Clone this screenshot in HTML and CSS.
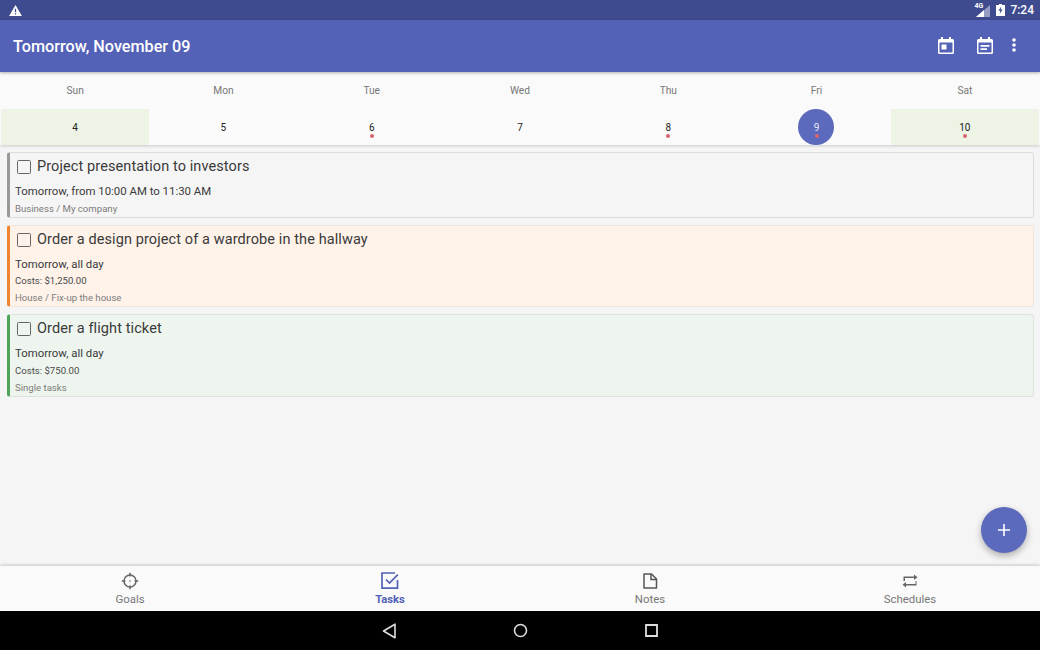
FILE: index.html
```html
<!DOCTYPE html>
<html lang="en">
<head>
<meta charset="utf-8">
<title>Tasks</title>
<link rel="stylesheet" href="styles.css">
</head>
<body>
<div class="app">
  <div class="status">
    <svg class="warn" viewBox="0 0 14 12" width="13" height="11"><path fill="#fff" d="M7 0 14 12H0Z"/><path fill="#3f4b8f" d="M6.300 4h1.400v4H6.300zM6.300 9h1.400v1.400H6.300z"/></svg>
    <div class="status-right">
      <span class="net">4G</span>
      <svg class="sig" viewBox="0 0 14 12" width="14" height="12"><path fill="#fff" d="M14 0V12H0Z" opacity=".45"/><path fill="#fff" d="M8 5V12H0Z"/></svg>
      <svg class="bat" viewBox="0 0 9 12" width="9" height="12"><path fill="#fff" d="M3 0h3v1h3v11H0V1h3z"/><path fill="#3f4b8f" d="M5.200 2.500 2.500 6.800h1.700L3.700 10 6.500 5.500H4.800z"/></svg>
      <span class="time">7:24</span>
    </div>
  </div>
  <header class="appbar">
    <h1 class="title">Tomorrow, November 09</h1>
    <div class="actions">
      <svg class="ic-cal" viewBox="0 0 16 17" width="16" height="17"><path fill="#fff" d="M3 0h2v2h6V0h2v2h1.500A1.500 1.500 0 0 1 16 3.500v12a1.500 1.500 0 0 1-1.500 1.500h-13A1.500 1.500 0 0 1 0 15.500v-12A1.500 1.500 0 0 1 1.500 2H3z"/><path fill="#5361b7" d="M1.500 5.500h13v10h-13z"/><path fill="#fff" d="M3.500 7.500h5v5h-5z"/></svg>
      <svg class="ic-cal2" viewBox="0 0 16 17" width="16" height="17"><path fill="#fff" d="M3 0h2v2h6V0h2v2h1.500A1.500 1.500 0 0 1 16 3.500v12a1.500 1.500 0 0 1-1.500 1.500h-13A1.500 1.500 0 0 1 0 15.500v-12A1.500 1.500 0 0 1 1.500 2H3z"/><path fill="#5361b7" d="M1.500 5.500h13v10h-13z"/><path fill="#fff" d="M3.500 8h9v1.700h-9zM3.500 11.300h6.500v1.700H3.500z"/></svg>
      <svg class="ic-more" viewBox="0 0 4 14" width="4" height="14"><circle cx="2" cy="2" r="1.800" fill="#fff"/><circle cx="2" cy="7" r="1.800" fill="#fff"/><circle cx="2" cy="12" r="1.800" fill="#fff"/></svg>
    </div>
  </header>
  <section class="week">
    <div class="week-row names">
      <span>Sun</span><span>Mon</span><span>Tue</span><span>Wed</span><span>Thu</span><span>Fri</span><span>Sat</span>
    </div>
    <div class="week-row days">
      <div class="day off">4</div>
      <div class="day">5</div>
      <div class="day dot">6</div>
      <div class="day">7</div>
      <div class="day dot">8</div>
      <div class="day selected dot"><span class="circle"></span><span class="num">9</span></div>
      <div class="day off dot">10</div>
    </div>
  </section>
  <main class="list">
    <article class="card gray">
      <div class="card-title"><span class="check"></span>Project presentation to investors</div>
      <div class="when">Tomorrow, from 10:00 AM to 11:30 AM</div>
      <div class="group">Business / My company</div>
    </article>
    <article class="card orange">
      <div class="card-title"><span class="check"></span>Order a design project of a wardrobe in the hallway</div>
      <div class="when">Tomorrow, all day</div>
      <div class="cost">Costs: $1,250.00</div>
      <div class="group">House / Fix-up the house</div>
    </article>
    <article class="card green">
      <div class="card-title"><span class="check"></span>Order a flight ticket</div>
      <div class="when">Tomorrow, all day</div>
      <div class="cost">Costs: $750.00</div>
      <div class="group">Single tasks</div>
    </article>
    <button class="fab" aria-label="Add"><svg viewBox="0 0 12 12" width="12" height="12"><path fill="#fff" d="M5.200 0h1.600v5.200H12v1.600H6.800V12H5.200V6.800H0V5.200h5.200z"/></svg></button>
  </main>
  <nav class="tabs">
    <div class="tab">
      <svg viewBox="0 0 18 18" width="18" height="18" fill="none" stroke="#666" stroke-width="1.500"><circle cx="9" cy="9" r="6"/><path d="M9 .8v3.600M9 13.600v3.600M.8 9h3.600M13.600 9h3.600"/><circle cx="9" cy="9" r=".8" fill="#666" stroke="none"/></svg>
      <span>Goals</span>
    </div>
    <div class="tab active">
      <svg viewBox="0 0 18 18" width="18" height="18" fill="none" stroke="#5361b7" stroke-width="1.700"><path d="M16.500 8v8.200H1V1h13"/><path d="M5 7.500 8.500 11 16.800 2.700"/></svg>
      <span>Tasks</span>
    </div>
    <div class="tab">
      <svg viewBox="0 0 18 18" width="18" height="18" fill="none" stroke="#555" stroke-width="1.500"><path d="M3 2h7.500L15.500 7v9H3z" stroke-linejoin="round"/><path d="M10 2v5.500h5.500"/></svg>
      <span>Notes</span>
    </div>
    <div class="tab">
      <svg viewBox="0 0 18 18" width="18" height="18" fill="#666"><path d="M2.500 9V4.500H13V2.500l3.500 2.800L13 8V6H4v3zM15.500 9v4.500H5v2L1.500 12.800 5 10v2h9.500V9z"/></svg>
      <span>Schedules</span>
    </div>
  </nav>
  <footer class="sysbar">
    <svg viewBox="0 0 14 16" width="14" height="16" fill="none" stroke="#ddd" stroke-width="1.600"><path d="M13 1.200V14.800L1.500 8Z" stroke-linejoin="round"/></svg>
    <svg viewBox="0 0 15 15" width="15" height="15" fill="none" stroke="#ddd" stroke-width="1.600"><circle cx="7.500" cy="7.500" r="6"/></svg>
    <svg viewBox="0 0 13 13" width="13" height="13" fill="none" stroke="#ddd" stroke-width="1.800"><path d="M1 1h11v11H1z"/></svg>
  </footer>
</div>
</body>
</html>
```
FILE: styles.css
```css
* { box-sizing: border-box; }
html, body { margin: 0; padding: 0; }
body { font-family: Roboto, "Liberation Sans", sans-serif; background: #f5f5f5; }
.app { width: 1040px; height: 650px; display: flex; flex-direction: column; overflow: hidden; }

.status { height: 20px; flex: none; background: #3f4b8f; display: flex; align-items: center; justify-content: space-between; padding: 0 6px 0 9px; color: #fff; }
.status-right { display: flex; align-items: center; }
.net { font-size: 7px; font-weight: 700; margin-right: -7px; margin-top: -9px; }
.sig { margin-top: 1px; }
.bat { margin-left: 6px; }
.time { font-size: 12px; font-weight: 500; margin-left: 5px; }

.appbar { height: 52px; flex: none; background: #5361b7; display: flex; align-items: center; justify-content: space-between; padding: 0 24px 0 13px; color: #fff; position: relative; z-index: 2; box-shadow: 0 1px 3px rgba(0,0,0,.3); }
.title { margin: 0; font-size: 16.200px; font-weight: 500; }
.actions { display: flex; align-items: center; gap: 23px; margin-top: -2px; }
.ic-more { margin-left: -4px; }

.week { flex: none; height: 73px; background: #fafafa; position: relative; z-index: 1; box-shadow: 0 1px 3px rgba(0,0,0,.18); padding: 0 1px; }
.week-row { display: grid; grid-template-columns: repeat(7, 1fr); }
.names { height: 37px; align-items: center; font-size: 10.200px; color: #777; text-align: center; }
.days { height: 36px; }
.day { position: relative; display: flex; align-items: center; justify-content: center; font-size: 10px; color: #222; }
.off { background: #edf4e5; }
.dot::after { content: ""; position: absolute; left: 50%; top: 25px; width: 4px; height: 4px; margin-left: -2px; border-radius: 50%; background: #d9646f; }
.selected { color: #e8e8f5; }
.circle { position: absolute; left: 50%; top: 0; width: 36px; height: 36px; margin-left: -18.500px; border-radius: 50%; background: #5c6abd; }
.num { position: relative; }

.list { flex: 1; position: relative; padding: 7px 6px 0 7px; display: flex; flex-direction: column; gap: 7px; min-height: 0; }
.card { border: 1px solid #dcdcdc; border-left: 3px solid #999; border-radius: 3px; background: #f5f5f5; padding: 3px 8px 1px 5px; }
.card.orange { background: #fef2e9; border-color: #f1e4db; border-left-color: #ef8432; }
.card.green { background: #eef5ee; border-color: #dbe3db; border-left-color: #4ea457; }
.card-title { display: flex; align-items: center; height: 20px; font-size: 14.500px; color: #3a3a3a; letter-spacing: .1px; }
.check { width: 14px; height: 14px; border: 1.500px solid #666; border-radius: 1.500px; margin: 1px 6px 0 2px; flex: none; }
.when { font-size: 11.400px; color: #3a3a3a; line-height: 16px; margin-top: 7px; height: 16px; }
.cost { font-size: 9.600px; color: #4a4a4a; line-height: 14px; margin-top: 3px; height: 14px; }
.orange .cost { margin-top: 2px; }
.group { font-size: 9.600px; color: #7c7c7c; line-height: 14px; margin-top: 3px; height: 14px; }

.fab { position: absolute; right: 13px; top: 362px; width: 46px; height: 46px; border: 0; border-radius: 50%; background: #5c6abd; box-shadow: 0 3px 7px rgba(0,0,0,.3); display: flex; align-items: center; justify-content: center; padding: 0; }

.tabs { flex: none; height: 45px; background: #fafafa; display: grid; grid-template-columns: repeat(4, 1fr); box-shadow: 0 -1px 3px rgba(0,0,0,.2); position: relative; }
.tab { display: flex; flex-direction: column; align-items: center; padding-top: 6px; font-size: 11.400px; color: #777; }
.tab span { line-height: 14px; margin-top: 2px; }
.tab.active { color: #5361b7; font-weight: 700; font-size: 11.200px; }
.tab.active span { margin-top: 3px; }

.sysbar { flex: none; height: 39px; background: #000; display: grid; grid-template-columns: repeat(3, 131px); justify-content: center; justify-items: center; align-items: center; }
```
